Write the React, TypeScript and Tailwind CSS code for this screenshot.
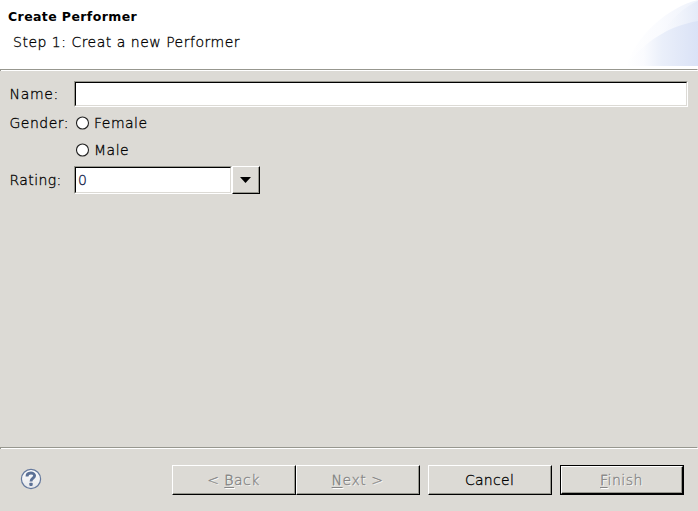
import type { ReactNode } from 'react';

function Separator() {
  return (
    <div className="h-[2px] shrink-0 border-t border-l border-t-[#97978f] border-l-[#97978f] border-r border-r-white bg-white" />
  );
}

function Sunken({ className, children }: { className: string; children?: ReactNode }) {
  return (
    <div className={`border border-t-[#97978f] border-l-[#97978f] border-r-white border-b-white ${className}`}>
      <div className="flex h-full items-center border border-t-black border-l-black border-r-[#dcdad5] border-b-[#dcdad5] bg-white pl-[2px] text-[#101a45]">
        {children}
      </div>
    </div>
  );
}

function Raised({ className, children }: { className: string; children: ReactNode }) {
  return (
    <div className={`border border-t-white border-l-white border-r-black border-b-black ${className}`}>
      <div className="flex h-full items-center justify-center border-r border-b border-[#97978f]">{children}</div>
    </div>
  );
}

const disabled = 'tracking-[0.5px] text-[#858585] [text-shadow:1px_1px_0_white]';

function Mnemonic({ children }: { children: string }) {
  return <span className="underline decoration-1 underline-offset-2">{children}</span>;
}

function Radio({ label }: { label: string }) {
  return (
    <div className="flex h-[27px] items-center">
      <svg width="14" height="14" className="mr-[4px]">
        <circle cx="6.5" cy="7" r="6" fill="white" stroke="#222" strokeWidth="1.1" />
      </svg>
      <span className="leading-[18px] tracking-[0.5px]">{label}</span>
    </div>
  );
}

export default function App() {
  return (
    <div className="flex h-[511px] w-[698px] flex-col overflow-hidden bg-[#dcdad5] font-['DejaVu_Sans',sans-serif] text-[14px] leading-[18px] font-[200] whitespace-pre text-black [-webkit-text-stroke:0.3px]">
      <header className="flex h-[69px] shrink-0 justify-between bg-white">
        <div className="pt-[8px] pl-[8px]">
          <h1 className="text-[12.5px] leading-[17px] font-bold tracking-[0.4px] [-webkit-text-stroke:0]">Create Performer</h1>
          <p className="mt-[8px] pl-[5px] tracking-[0.5px]">Step 1: Creat a new Performer</p>
        </div>
        <svg width="76" height="66" viewBox="0 0 76 66">
          <defs>
            <linearGradient id="outer" x1="0" x2="1">
              <stop offset="0" stopColor="#fff" />
              <stop offset=".45" stopColor="#fafbfe" />
              <stop offset="1" stopColor="#eef2fb" />
            </linearGradient>
            <linearGradient id="middle" x1="0" x2="1">
              <stop offset="0" stopColor="#fff" stopOpacity="0" />
              <stop offset="1" stopColor="#e4eaf8" />
            </linearGradient>
            <linearGradient id="inner" x1="0" x2="1">
              <stop offset="0" stopColor="#fff" />
              <stop offset=".25" stopColor="#fafbfe" />
              <stop offset=".5" stopColor="#eaeffa" />
              <stop offset="1" stopColor="#dae2f6" />
            </linearGradient>
          </defs>
          <path d="M4 66C15 35 46 7 76 0V66Z" fill="url(#outer)" />
          <path d="M27 66C31 42 50 12 76 1V66Z" fill="url(#middle)" />
          <path d="M4 66C22 42 46 26 76 21V66Z" fill="url(#inner)" />
        </svg>
      </header>
      <Separator />
      <main className="grow pt-[10px] pl-[9px]">
        <div className="flex h-[26px] items-center">
          <label className="w-[65px] pl-[0.5px] tracking-[0.7px]">Name:</label>
          <Sunken className="h-[26px] w-[614px]" />
        </div>
        <div className="flex pt-[2px]">
          <span className="w-[67px] pt-[5px] pl-[0.5px] tracking-[0.5px]">Gender:</span>
          <div>
            <Radio label="Female" />
            <Radio label="Male" />
          </div>
        </div>
        <div className="mt-[3px] flex h-[28px] items-center">
          <label className="w-[65px] pl-[0.5px] tracking-[0.4px]">Rating:</label>
          <Sunken className="h-[28px] w-[158px]">0</Sunken>
          <Raised className="h-[28px] w-[28px]">
            <svg width="11" height="6" viewBox="0 0 11 6" className="mr-px">
              <path d="M0 0H11L5.5 6Z" />
            </svg>
          </Raised>
        </div>
      </main>
      <Separator />
      <footer className="flex h-[62px] shrink-0 items-start pt-[16px]">
        <svg className="mt-[3px] ml-[20px]" width="22" height="22" viewBox="0 0 22 22">
          <defs>
            <linearGradient id="help" x2="0" y2="1">
              <stop stopColor="#fff" />
              <stop offset="1" stopColor="#e4e6ea" />
            </linearGradient>
          </defs>
          <circle cx="11" cy="11" r="9.6" fill="url(#help)" stroke="#65799d" strokeWidth="1.2" />
          <path d="M7 8.5C7 3.8 14.6 4 14.6 7.8C14.6 10.2 11 10.2 11 13.4" fill="none" stroke="#5c7196" strokeWidth="2.9" />
          <rect x="9.3" y="14.7" width="3.4" height="3.2" rx=".8" fill="#5c7196" />
        </svg>
        <Raised className="ml-[130px] h-[30px] w-[124px]">
          <span className={disabled}>{'< '}<Mnemonic>B</Mnemonic>ack</span>
        </Raised>
        <Raised className="h-[30px] w-[124px]">
          <span className={disabled}><Mnemonic>N</Mnemonic>{'ext >'}</span>
        </Raised>
        <Raised className="ml-[8px] h-[30px] w-[124px]">
          <span className="tracking-[0.3px]">Cancel</span>
        </Raised>
        <div className="ml-[8px] h-[30px] w-[124px] border border-black">
          <Raised className="h-full">
            <span className={disabled}><Mnemonic>F</Mnemonic>inish</span>
          </Raised>
        </div>
      </footer>
    </div>
  );
}
